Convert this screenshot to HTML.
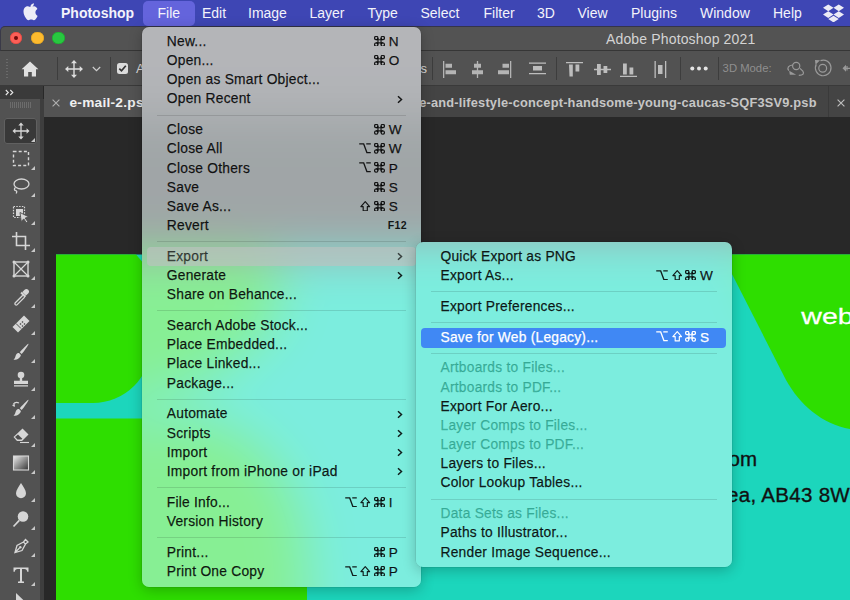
<!DOCTYPE html>
<html><head><meta charset="utf-8">
<style>
*{box-sizing:border-box}
html,body{margin:0;padding:0}
body{width:850px;height:600px;overflow:hidden;position:relative;background:#282828;font-family:"Liberation Sans",sans-serif}
.abs{position:absolute}
svg{display:block}
#menubar{left:0;top:0;width:850px;height:26px;background:#3e46b4}
#menubar span{position:absolute;top:0;line-height:26px;font-size:14px;color:#f3f3fb;white-space:nowrap}
#filehl{left:142.5px;top:0.5px;width:52px;height:25px;border-radius:5px;background:#6464dc}
#titlebar{left:0;top:26px;width:850px;height:25px;background:#535353;border-top-left-radius:5px;border-top:1.2px solid #34344a;border-left:1px solid #3a3a48;border-bottom:1px solid #363636}
.tl{position:absolute;top:31.8px;width:12.4px;height:12.4px;border-radius:50%}
#title{left:606px;top:26px;height:25px;line-height:26px;color:#d4d4d4;font-size:14px;letter-spacing:.15px;white-space:nowrap}
#optbar{left:0;top:51px;width:850px;height:35px;background:#525252;border-bottom:1px solid #3a3a3a}
.vsep{position:absolute;top:57px;width:1px;height:23px;background:#3d3d3d}
#tabbar{left:44px;top:86px;width:806px;height:31px;background:#444444}
#tabact{left:44px;top:86px;width:330px;height:31px;background:#535353}
#panelhdr{left:0;top:86px;width:43px;height:13px;background:#3a3a3a}
#panel{left:0;top:99px;width:40px;height:501px;background:#525252}
#gap{left:40px;top:99px;width:4px;height:501px;background:#3e3e3e}
#gap2{left:43px;top:86px;width:1.5px;height:514px;background:#2e2e2e}
#canvas{left:44px;top:117px;width:806px;height:483px;background:#282828}
.tool{position:absolute;left:0;width:40px;height:26px}
.tool svg{position:absolute;left:11px;top:4px}
.tri{position:absolute;width:0;height:0;border-left:4px solid transparent;border-bottom:4px solid #c8c8c8}
.menu{position:absolute;border-radius:7px;box-shadow:0 0 0 .5px rgba(0,0,0,.12),0 3px 14px rgba(0,0,0,.24);padding-top:5px}
.mbg{position:absolute;left:0;top:0;right:0;bottom:0;border-radius:7px;overflow:hidden}
.mbg svg{position:absolute}
.mov{position:absolute;left:0;top:0;right:0;bottom:0;background:rgba(236,239,242,.615)}
.it{position:relative;height:19.2px;line-height:19.2px;font-size:13.8px;letter-spacing:.23px;color:rgba(0,0,0,.88);-webkit-text-stroke:.25px currentColor;white-space:nowrap;padding-left:25px}
.it.hl{background:none;color:rgba(0,0,0,.68)}
.it.hl:before{content:"";position:absolute;left:5.6px;right:5px;top:-0.2px;bottom:-0.3px;border-radius:4px;background:rgba(190,194,192,.64)}
.it.hl>*{position:absolute}
.it.sel{color:#fff}
.it.sel:before{content:"";position:absolute;left:5.4px;right:5.6px;top:0.9px;bottom:-0.9px;border-radius:4px;background:#4088f4}
.it.sel{z-index:1}
.lbl{position:relative}
.sep{position:relative;height:11.6px}
.sep:after{content:"";position:absolute;left:15px;right:15px;top:6px;height:1px;background:rgba(0,0,0,.12)}
.mk{position:absolute;top:3.9px;height:11px;color:inherit;-webkit-text-stroke:0}
.mk svg{color:inherit}
.ky{position:absolute;top:0;font-size:13.6px;letter-spacing:0}
.f12{font-size:10.6px;font-weight:bold;letter-spacing:.35px;-webkit-text-stroke:0}
.chev{position:absolute;right:17.6px;top:5.3px}
.dis{color:rgba(0,120,95,.5)}
.ic{position:absolute}
</style></head><body>

<!-- menubar -->
<div id="menubar" class="abs">
  <svg class="abs" style="left:22.5px;top:2.5px" width="15" height="18" viewBox="0 0 15 18"><path fill="#ececf6" d="M10.9.2c.1 1.1-.3 2.1-.9 2.8-.7.8-1.6 1.3-2.6 1.2-.1-1 .4-2 1-2.7C9 .8 10 .3 10.9.2zM14.2 6.2c-.1.1-1.8 1-1.8 3.2 0 2.5 2.2 3.3 2.2 3.3s-.3 1.2-1.1 2.4c-.7 1-1.4 2.100-2.600 2.100-1.100 0-1.400-.7-2.700-.7s-1.700.7-2.700.7C4.300 17.200 3.500 16.100 2.800 15.100 1.400 13.100.5 10.600.5 8.500c0-3.400 2.200-5.200 4.400-5.200 1.200 0 2.100.8 2.800.8.700 0 1.700-.9 3-.9.5 0 2.200.1 3.500 2z"/></svg>
  <span style="left:61px;font-weight:bold">Photoshop</span>
  <div id="filehl" class="abs"></div>
  <span style="left:157.5px">File</span>
  <span style="left:202px">Edit</span>
  <span style="left:248px">Image</span>
  <span style="left:309.5px">Layer</span>
  <span style="left:367.5px">Type</span>
  <span style="left:420.5px">Select</span>
  <span style="left:483.5px">Filter</span>
  <span style="left:537px">3D</span>
  <span style="left:577.5px">View</span>
  <span style="left:631px">Plugins</span>
  <span style="left:700px">Window</span>
  <span style="left:773px">Help</span>
  <svg class="abs" style="left:823px;top:4px" width="21" height="18" viewBox="0 0 21 18"><path fill="#ececf6" d="M5.25.5L0 3.85l5.25 3.35L10.5 3.85zM15.75.5L10.5 3.85l5.25 3.35L21 3.85zM0 10.55l5.25 3.35 5.25-3.35L5.25 7.2zM15.75 7.2L10.5 10.55l5.25 3.35L21 10.55zM5.25 15L10.5 18.35 15.75 15 10.5 11.65z"/></svg>
</div>

<!-- title bar -->
<div class="abs" style="left:0;top:20px;width:20px;height:20px;background:#3e46b4"></div>
<div id="titlebar" class="abs"></div>
<div class="tl" style="left:9.8px;background:#fc5f57;box-shadow:inset 0 0 0 .6px #de463f"><div style="position:absolute;left:4.2px;top:4.2px;width:4px;height:4px;border-radius:50%;background:#700b0b"></div></div>
<div class="tl" style="left:31.2px;background:#fdbb2e;box-shadow:inset 0 0 0 .6px #dc9f22"></div>
<div class="tl" style="left:52.3px;background:#28c840;box-shadow:inset 0 0 0 .6px #1ea42f"></div>
<div id="title" class="abs">Adobe Photoshop 2021</div>

<!-- options bar -->
<div id="optbar" class="abs"></div>
<div class="abs" style="left:6px;top:59px;width:2px;height:21px;background:repeating-linear-gradient(#6a6a6a 0 1px,transparent 1px 3px)"></div>
<svg class="ic" style="left:21px;top:61px" width="18" height="16" viewBox="0 0 18 16"><path fill="#e0e0e0" d="M9 0.5L0.6 8.2h2.4V15.5h4.2v-4.6h3.6v4.6h4.2V8.2h2.4z"/></svg>
<div class="vsep" style="left:56.5px"></div>
<svg class="ic" style="left:65px;top:60px" width="18" height="18" viewBox="0 0 18 18"><path fill="none" stroke="#dedede" stroke-width="1.4" d="M9 1.5v15M1.5 9h15"/><path fill="#dedede" d="M9 0L6 3.3h6zM9 18l-3-3.3h6zM0 9l3.3-3v6zM18 9l-3.3-3v6z"/></svg>
<svg class="ic" style="left:92px;top:66px" width="9" height="6" viewBox="0 0 9 6"><path d="M.8 1l3.7 3.6L8.2 1" fill="none" stroke="#cfcfcf" stroke-width="1.2"/></svg>
<div class="vsep" style="left:109.5px"></div>
<div class="abs" style="left:116.8px;top:62.6px;width:11.2px;height:11.4px;border-radius:2.5px;background:#dcdcdc"></div>
<svg class="ic" style="left:118px;top:64px" width="9" height="9" viewBox="0 0 9 9"><path d="M1.3 4.6l2.2 2.2 4.3-5" fill="none" stroke="#333" stroke-width="1.7"/></svg>
<div class="abs" style="left:136px;top:51px;line-height:35px;font-size:13px;color:#dadada">Auto-Select:</div>
<div class="abs" style="right:423px;top:51px;line-height:35px;font-size:13px;color:#dadada;white-space:nowrap">Show Transform Controls</div>
<div class="vsep" style="left:431.5px"></div>
<!-- align icons -->
<svg class="ic" style="left:441px;top:61px" width="17" height="17" viewBox="0 0 17 17"><path fill="#b4b4b4" d="M2 0h1.3v17H2zM4.5 2.8h6.5v4h-6.5zM4.5 9.3h10.5v4h-10.5z"/></svg>
<svg class="ic" style="left:468.5px;top:61px" width="17" height="17" viewBox="0 0 17 17"><path fill="#b4b4b4" d="M7.85 0h1.3v17h-1.3zM5 2.8h7v4H5zM3 9.3h11v4H3z"/></svg>
<svg class="ic" style="left:496px;top:61px" width="17" height="17" viewBox="0 0 17 17"><path fill="#b4b4b4" d="M14 0h1.3v17H14zM6.5 2.8h6.5v4H6.5zM2 9.3h11v4H2z"/></svg>
<svg class="ic" style="left:529px;top:61px" width="17" height="17" viewBox="0 0 17 17"><path fill="#bdbdbd" d="M0 1.5h17v1.3H0zM4 5h9v4.5H4zM0 12h17v1.3H0z"/></svg>
<div class="vsep" style="left:556px"></div>
<svg class="ic" style="left:565.5px;top:61px" width="17" height="17" viewBox="0 0 17 17"><path fill="#bdbdbd" d="M0 1h17v1.3H0zM3 3.5h3.8v12H3.5zM9.5 3.5h3.8v7H9.5z"/></svg>
<svg class="ic" style="left:593.5px;top:61px" width="17" height="17" viewBox="0 0 17 17"><path fill="#bdbdbd" d="M0 7.85h17v1.3H0zM3 3h3.8v11H3zM9.5 5h3.8v7H9.5z"/></svg>
<svg class="ic" style="left:620px;top:61px" width="17" height="17" viewBox="0 0 17 17"><path fill="#bdbdbd" d="M0 14.7h17v1.3H0zM3 2.5h3.8v11H3zM9.5 6.5h3.8v7H9.5z"/></svg>
<svg class="ic" style="left:652.5px;top:61px" width="17" height="17" viewBox="0 0 17 17"><path fill="#bdbdbd" d="M1.5 0h1.3v17H1.5zM5 4h4.5v9H5zM12 0h1.3v17H12z"/></svg>
<div class="vsep" style="left:680px"></div>
<svg class="ic" style="left:690px;top:66px" width="18" height="5" viewBox="0 0 18 5"><circle cx="2.3" cy="2.5" r="2" fill="#e4e4e4"/><circle cx="9" cy="2.5" r="2" fill="#e4e4e4"/><circle cx="15.7" cy="2.5" r="2" fill="#e4e4e4"/></svg>
<div class="vsep" style="left:717.5px"></div>
<div class="abs" style="left:722.6px;top:51px;line-height:35px;font-size:11.3px;color:#8f8f8f;white-space:nowrap">3D Mode:</div>
<svg class="ic" style="left:780px;top:55px" width="70" height="30" viewBox="0 0 70 30"><g fill="none" stroke="#9a9a9a" stroke-width="1.2"><circle cx="16.2" cy="11" r="3.6"/><path d="M12.7 10C8.500 10.300 6.700 12.800 8.800 15.600"/><path d="M18.800 20.300C23.500 20.300 24.300 18.300 22.800 16.200L20 13.300"/><path d="M36.300 9.300A7.800 7.800 0 1 0 40.500 5.600"/><circle cx="42.700" cy="13.300" r="3.900"/><path d="M70 13.300H65M67 11V15.600"/></g><g fill="#9a9a9a"><path d="M9.200 15.800L16.200 19.800H9.800z"/><path d="M35 5L40 5.300 35.500 9.700z"/><path d="M62.500 13.300L66 9.800V16.800z"/></g></svg>
<!-- tab bar -->
<div id="tabbar" class="abs"></div>
<div id="tabact" class="abs"></div>
<div class="abs" style="left:828px;top:86px;width:1px;height:31px;background:#3a3a3a"></div>
<svg class="ic" style="left:51.5px;top:99px" width="8" height="8" viewBox="0 0 8 8"><path d="M.6.6l6.8 6.8M7.4.6L.6 7.4" stroke="#b0b0b0" stroke-width="1.1"/></svg>
<div class="abs" style="left:69.5px;top:87px;line-height:31px;font-size:13.7px;letter-spacing:.25px;font-weight:bold;color:#f0f0f0;white-space:nowrap">e-mail-2.psd @ 33.3% (RGB/8)</div>
<div class="abs" style="left:217px;top:86px;width:611px;height:31px;background:#444444"></div>
<div class="abs" style="right:33.3px;top:87.2px;line-height:31px;font-size:12.8px;letter-spacing:.2px;font-weight:bold;color:#c6c6c6;white-space:nowrap">close-up-portrait-of-male-and-lifestyle-concept-handsome-young-caucas-SQF3SV9.psb</div>
<svg class="ic" style="left:836.5px;top:98.5px" width="8" height="8" viewBox="0 0 8 8"><path d="M.6.6l6.8 6.8M7.4.6L.6 7.4" stroke="#c0c0c0" stroke-width="1.1"/></svg>
<div id="panelhdr" class="abs"></div>
<svg class="ic" style="left:5px;top:89px" width="10" height="7" viewBox="0 0 10 7"><path d="M.8 1l2.5 2.5L.8 6M5.3 1l2.5 2.5L5.3 6" fill="none" stroke="#e8e8e8" stroke-width="1.1"/></svg>
<div id="panel" class="abs"></div>
<div id="gap" class="abs"></div>
<div class="abs" style="left:10px;top:102px;width:21px;height:6px;background:repeating-linear-gradient(90deg,#6c6c6c 0 1px,transparent 1px 2px)"></div>

<!-- canvas -->
<div id="canvas" class="abs"></div>

<svg class="abs" style="left:0;top:0" width="850" height="600" viewBox="0 0 850 600"><rect x="56" y="254.5" width="794" height="346" fill="#1cd6bc"/><path fill="#2ede00" d="M56 254.5H136L151 272V345A58 58 0 0 1 93 403H56Z"/><path fill="#2ede00" d="M56 418.5H150C245 418.5 307 480 307 580V600H56Z"/><path fill="#2ede00" d="M722 254.5H850V429C822 424 800 405 786 380L722 254.5Z"/><text transform="translate(801.3 323.8) scale(1.27 1)" font-family="Liberation Sans" font-size="22.5" fill="#fff" stroke="#fff" stroke-width="0.25">web</text><text x="757" y="466" text-anchor="end" font-family="Liberation Sans" font-size="20.5" fill="#111" stroke="#111" stroke-width="0.35">info@company.com</text><text x="850" y="502" text-anchor="end" font-family="Liberation Sans" font-size="20.5" fill="#111" stroke="#111" stroke-width="0.35" letter-spacing="0.3">Street, Area, AB43 8W</text></svg>

<!-- tools -->
<div class="abs" style="left:4px;top:117.6px;width:33px;height:26.4px;border-radius:3px;background:#383838;box-shadow:inset 0 0 0 1px #606060"></div>
<svg class="ic" style="left:11.5px;top:122.0px" width="18" height="18" viewBox="0 0 18 18"><path fill="none" stroke="#d6d6d6" stroke-width="1.3" d="M9 2.5v13M2.5 9h13"/><path fill="#d6d6d6" d="M9 .5L6.3 3.4h5.4zM9 17.5l-2.7-2.9h5.4zM.5 9l2.9-2.7v5.4zM17.5 9l-2.9-2.7v5.4z"/></svg>
<div class="tri" style="left:31px;top:138.0px"></div>
<svg class="ic" style="left:11.5px;top:150.0px" width="18" height="18" viewBox="0 0 18 18"><rect x="1.5" y="1.5" width="15" height="14" fill="none" stroke="#d6d6d6" stroke-width="1.4" stroke-dasharray="3 2.2"/></svg>
<div class="tri" style="left:31px;top:166.0px"></div>
<svg class="ic" style="left:11.5px;top:177.0px" width="18" height="18" viewBox="0 0 18 18"><ellipse cx="9.5" cy="7" rx="7.5" ry="5" fill="none" stroke="#d6d6d6" stroke-width="1.3"/><path d="M3.5 10.5c-1.5 1-1.5 3 .3 3.2 1.2.1 1.2 1.5.3 2.8" fill="none" stroke="#d6d6d6" stroke-width="1.3"/></svg>
<div class="tri" style="left:31px;top:193.0px"></div>
<svg class="ic" style="left:11.5px;top:205.0px" width="18" height="18" viewBox="0 0 18 18"><rect x="1.5" y="1.5" width="11" height="11" fill="none" stroke="#d6d6d6" stroke-width="1.2" stroke-dasharray="1.5 1.3"/><path fill="#d6d6d6" d="M4 4h7v7H4z"/><path fill="#d6d6d6" stroke="#4e4e4e" stroke-width=".9" d="M8 7.5l9 4.5-3.8 1 2.6 3.8-1.6.9-2.4-3.8-2.6 2.6z"/></svg>
<div class="tri" style="left:31px;top:221.0px"></div>
<svg class="ic" style="left:11.5px;top:232.0px" width="18" height="18" viewBox="0 0 18 18"><path fill="none" stroke="#d6d6d6" stroke-width="1.6" d="M4.5 0v13.5H18M0 4.5h13.5V18"/></svg>
<div class="tri" style="left:31px;top:248.0px"></div>
<svg class="ic" style="left:11.5px;top:260.0px" width="18" height="18" viewBox="0 0 18 18"><rect x="2" y="2" width="14" height="14" fill="none" stroke="#d6d6d6" stroke-width="1.4"/><path d="M2 2l14 14M16 2L2 16" stroke="#d6d6d6" stroke-width="1.2"/><g fill="#d6d6d6"><circle cx="2" cy="2" r="1.5"/><circle cx="16" cy="2" r="1.5"/><circle cx="2" cy="16" r="1.5"/><circle cx="16" cy="16" r="1.5"/></g></svg>
<div class="tri" style="left:31px;top:276.0px"></div>
<svg class="ic" style="left:11.5px;top:288.0px" width="18" height="18" viewBox="0 0 18 18"><path fill="#d6d6d6" d="M12.6 1.8a2.5 2.5 0 0 1 3.6 3.6L14 7.6 10.4 4z"/><path fill="#d6d6d6" d="M8.4 5.3l1.5-1.5 4.3 4.3-1.5 1.5z"/><path fill="none" stroke="#d6d6d6" stroke-width="1.3" d="M10.8 7.2L3.300 14.700a1.300 1.300 0 0 0 1.900 1.900L12.700 9.100"/></svg>
<div class="tri" style="left:31px;top:304.0px"></div>
<svg class="ic" style="left:11.5px;top:315.0px" width="18" height="18" viewBox="0 0 18 18"><path fill="#d6d6d6" d="M6 17.5L.5 12 12 .5l5.5 5.5z"/><path fill="#4e4e4e" d="M7.5 9l1-1 1 1-1 1zM9.5 11l1-1 1 1-1 1zM9.5 7l1-1 1 1-1 1zM11.5 9l1-1 1 1-1 1z"/><path fill="none" stroke="#4e4e4e" stroke-width="1" d="M4 8.5l5 5"/></svg>
<div class="tri" style="left:31px;top:331.0px"></div>
<svg class="ic" style="left:11.5px;top:343.0px" width="18" height="18" viewBox="0 0 18 18"><path fill="#d6d6d6" d="M16.5.8c.6.4-5 8.5-6.8 10.2L7.8 9.2C9.6 7.4 15.9.4 16.5.8zM7 10l1.9 1.9c-.5 2.5-2.6 4.800-7.400 4.800 1.900-1.400 1.700-3.600 2.700-5.300C5 10.200 6.200 9.900 7 10z"/></svg>
<div class="tri" style="left:31px;top:359.0px"></div>
<svg class="ic" style="left:11.5px;top:371.0px" width="18" height="18" viewBox="0 0 18 18"><circle cx="9" cy="4" r="3.3" fill="#d6d6d6"/><path fill="#d6d6d6" d="M7.8 6.5h2.4v3.2H16v3.3H2V9.7h5.8zM2 14.3h14v1.3H2z"/></svg>
<div class="tri" style="left:31px;top:387.0px"></div>
<svg class="ic" style="left:11.5px;top:399.0px" width="18" height="18" viewBox="0 0 18 18"><path fill="#d6d6d6" d="M16.5.8c.6.4-5 8.5-6.8 10.2L7.8 9.2C9.6 7.4 15.9.4 16.5.8zM7 10l1.9 1.9c-.5 2.5-2.6 4.800-7.400 4.800 1.900-1.400 1.700-3.600 2.700-5.300C5 10.200 6.200 9.900 7 10z"/><path fill="none" stroke="#d6d6d6" stroke-width="1.1" d="M1 5.5c1.5-2 4-2.5 6-1.5"/><path fill="#d6d6d6" d="M0 6.5l3-1.5-.3 3z"/></svg>
<div class="tri" style="left:31px;top:415.0px"></div>
<svg class="ic" style="left:11.5px;top:427.0px" width="18" height="18" viewBox="0 0 18 18"><path fill="#d6d6d6" d="M10.5 1.5l6 6-6.5 6.500H5L1.500 10z"/><path fill="#4e4e4e" d="M3 10l2.5 2.5h4l.8-.8-4.300-4.300z"/><path fill="none" stroke="#d6d6d6" stroke-width="1.1" d="M8 15.5h9"/></svg>
<div class="tri" style="left:31px;top:443.0px"></div>
<svg class="ic" style="left:11.5px;top:454.0px" width="18" height="18" viewBox="0 0 18 18"><defs><linearGradient id="gg" x1="0" y1="0" x2="1" y2="1"><stop offset="0" stop-color="#eee"/><stop offset="1" stop-color="#333"/></linearGradient></defs><rect x="1.5" y="2" width="15" height="14" fill="url(#gg)" stroke="#d6d6d6" stroke-width="1.1"/></svg>
<div class="tri" style="left:31px;top:470.0px"></div>
<svg class="ic" style="left:11.5px;top:482.0px" width="18" height="18" viewBox="0 0 18 18"><path fill="#d6d6d6" d="M9 1C11 4.500 14 8 14 11.300a5 5 0 0 1-10 0C4 8 7 4.500 9 1z"/></svg>
<div class="tri" style="left:31px;top:498.0px"></div>
<svg class="ic" style="left:11.5px;top:510.0px" width="18" height="18" viewBox="0 0 18 18"><circle cx="11" cy="6.500" r="5.300" fill="#d6d6d6"/><path d="M7.300 10.300L1.500 16.500" stroke="#d6d6d6" stroke-width="1.700"/></svg>
<div class="tri" style="left:31px;top:526.0px"></div>
<svg class="ic" style="left:11.5px;top:537.0px" width="18" height="18" viewBox="0 0 18 18"><path fill="none" stroke="#d6d6d6" stroke-width="1.3" d="M3 15.500l2-7 6.500-3.500 2 2-3.500 6.500zM3 15.500l4.500-4.500M11.5 5l2-2.500 2.500 2.500-2.500 2"/><circle cx="8.300" cy="10.200" r="1.200" fill="#d6d6d6"/></svg>
<div class="tri" style="left:31px;top:553.0px"></div>
<svg class="ic" style="left:11.5px;top:566.0px" width="18" height="18" viewBox="0 0 18 18"><path fill="#d6d6d6" d="M1.500 1.500h15v4.300h-1.300c-.3-1.800-.800-2.700-3-2.700H10v11.300c0 .900.500 1.200 2 1.200v1.300H6v-1.300c1.500 0 2-.3 2-1.200V3.100H5.800c-2.200 0-2.700.900-3 2.700H1.500z"/></svg>
<div class="tri" style="left:31px;top:582.0px"></div>
<svg class="ic" style="left:11.5px;top:593.0px" width="18" height="18" viewBox="0 0 18 18"><path fill="#d6d6d6" d="M4 0v16l4-4 3 6 2-1-3-6h5.500z"/></svg>

<!-- File menu -->
<div class="menu" style="left:141.8px;top:26.8px;width:279.2px;height:560px"><div class="mbg"><svg style="left:-141.8px;top:-26.8px" width="850" height="600" viewBox="0 0 850 600"><defs><filter id="vb1" x="-300" y="-300" width="1450" height="1200" filterUnits="userSpaceOnUse" color-interpolation-filters="sRGB"><feGaussianBlur stdDeviation="25"/><feColorMatrix type="matrix" values="0.7244 -0.1575 0.0015 0 0.5369 0.0256 0.4075 0.0095 0 0.5790 0.1095 -0.0162 0.4026 0 0.5761 0 0 0 1 0"/></filter></defs><g filter="url(#vb1)"><rect x="-200" y="-200" width="1250" height="226" fill="#4b4b4b"/><rect x="-200" y="26" width="1250" height="91" fill="#4b4b4b"/><rect x="-200" y="99" width="244" height="700" fill="#4e4e4e"/><rect x="44" y="117" width="1000" height="700" fill="#282828"/><rect x="56" y="254.5" width="1000" height="600" fill="#1cd6bc"/><path fill="#2ede00" d="M56 254.5H250C292 254.5 292 312 250 347C215 378 160 403 93 403H56Z"/><path fill="#2ede00" d="M56 418.5H185C265 425 307 490 307 580V800H56Z"/><path fill="#2ede00" d="M721 254.5H1000V429C828 418 805 395 792 378Z"/></g></svg></div>
<div class="it"><span class="lbl">New...</span><span class="mk" style="left:232.1px"><svg width="11" height="10.6" viewBox="0 0 11 11"><g fill="none" stroke="currentColor" stroke-width="1.25"><path d="M3.9 2.1V8.9M7.1 2.1V8.9M2.1 3.9H8.9M2.1 7.1H8.9"/><circle cx="2.1" cy="2.1" r="1.75"/><circle cx="8.9" cy="2.1" r="1.75"/><circle cx="2.1" cy="8.9" r="1.75"/><circle cx="8.9" cy="8.9" r="1.75"/></g></svg></span><span class="ky" style="left:246.9px">N</span></div>
<div class="it"><span class="lbl">Open...</span><span class="mk" style="left:232.1px"><svg width="11" height="10.6" viewBox="0 0 11 11"><g fill="none" stroke="currentColor" stroke-width="1.25"><path d="M3.9 2.1V8.9M7.1 2.1V8.9M2.1 3.9H8.9M2.1 7.1H8.9"/><circle cx="2.1" cy="2.1" r="1.75"/><circle cx="8.9" cy="2.1" r="1.75"/><circle cx="2.1" cy="8.9" r="1.75"/><circle cx="8.9" cy="8.9" r="1.75"/></g></svg></span><span class="ky" style="left:246.9px">O</span></div>
<div class="it"><span class="lbl">Open as Smart Object...</span></div>
<div class="it"><span class="lbl">Open Recent</span><svg class="chev" width="6" height="9" viewBox="0 0 6 9"><path d="M1 1.2l3.5 3.3L1 7.8" fill="none" stroke="currentColor" stroke-width="1.5"/></svg></div>
<div class="sep"></div>
<div class="it"><span class="lbl">Close</span><span class="mk" style="left:232.1px"><svg width="11" height="10.6" viewBox="0 0 11 11"><g fill="none" stroke="currentColor" stroke-width="1.25"><path d="M3.9 2.1V8.9M7.1 2.1V8.9M2.1 3.9H8.9M2.1 7.1H8.9"/><circle cx="2.1" cy="2.1" r="1.75"/><circle cx="8.9" cy="2.1" r="1.75"/><circle cx="2.1" cy="8.9" r="1.75"/><circle cx="8.9" cy="8.9" r="1.75"/></g></svg></span><span class="ky" style="left:246.9px">W</span></div>
<div class="it"><span class="lbl">Close All</span><span class="mk" style="left:216.9px"><svg width="12" height="10.6" viewBox="0 0 12 11"><path d="M0 0.9H4.6L8 10H12M7.3 0.9H12" fill="none" stroke="currentColor" stroke-width="1.45"/></svg></span><span class="mk" style="left:232.1px"><svg width="11" height="10.6" viewBox="0 0 11 11"><g fill="none" stroke="currentColor" stroke-width="1.25"><path d="M3.9 2.1V8.9M7.1 2.1V8.9M2.1 3.9H8.9M2.1 7.1H8.9"/><circle cx="2.1" cy="2.1" r="1.75"/><circle cx="8.9" cy="2.1" r="1.75"/><circle cx="2.1" cy="8.9" r="1.75"/><circle cx="8.9" cy="8.9" r="1.75"/></g></svg></span><span class="ky" style="left:246.9px">W</span></div>
<div class="it"><span class="lbl">Close Others</span><span class="mk" style="left:216.9px"><svg width="12" height="10.6" viewBox="0 0 12 11"><path d="M0 0.9H4.6L8 10H12M7.3 0.9H12" fill="none" stroke="currentColor" stroke-width="1.45"/></svg></span><span class="mk" style="left:232.1px"><svg width="11" height="10.6" viewBox="0 0 11 11"><g fill="none" stroke="currentColor" stroke-width="1.25"><path d="M3.9 2.1V8.9M7.1 2.1V8.9M2.1 3.9H8.9M2.1 7.1H8.9"/><circle cx="2.1" cy="2.1" r="1.75"/><circle cx="8.9" cy="2.1" r="1.75"/><circle cx="2.1" cy="8.9" r="1.75"/><circle cx="8.9" cy="8.9" r="1.75"/></g></svg></span><span class="ky" style="left:246.9px">P</span></div>
<div class="it"><span class="lbl">Save</span><span class="mk" style="left:232.1px"><svg width="11" height="10.6" viewBox="0 0 11 11"><g fill="none" stroke="currentColor" stroke-width="1.25"><path d="M3.9 2.1V8.9M7.1 2.1V8.9M2.1 3.9H8.9M2.1 7.1H8.9"/><circle cx="2.1" cy="2.1" r="1.75"/><circle cx="8.9" cy="2.1" r="1.75"/><circle cx="2.1" cy="8.9" r="1.75"/><circle cx="8.9" cy="8.9" r="1.75"/></g></svg></span><span class="ky" style="left:246.9px">S</span></div>
<div class="it"><span class="lbl">Save As...</span><span class="mk" style="left:218.4px"><svg width="10.5" height="10.6" viewBox="0 0 10.5 11"><path d="M5.25 0.7L0.7 5.8H3.1V10.3H7.4V5.8H9.8Z" fill="none" stroke="currentColor" stroke-width="1.2" stroke-linejoin="round"/></svg></span><span class="mk" style="left:232.1px"><svg width="11" height="10.6" viewBox="0 0 11 11"><g fill="none" stroke="currentColor" stroke-width="1.25"><path d="M3.9 2.1V8.9M7.1 2.1V8.9M2.1 3.9H8.9M2.1 7.1H8.9"/><circle cx="2.1" cy="2.1" r="1.75"/><circle cx="8.9" cy="2.1" r="1.75"/><circle cx="2.1" cy="8.9" r="1.75"/><circle cx="8.9" cy="8.9" r="1.75"/></g></svg></span><span class="ky" style="left:246.9px">S</span></div>
<div class="it"><span class="lbl">Revert</span><span class="ky f12" style="left:245.9px">F12</span></div>
<div class="sep"></div>
<div class="it hl"><span class="lbl">Export</span><svg class="chev" width="6" height="9" viewBox="0 0 6 9"><path d="M1 1.2l3.5 3.3L1 7.8" fill="none" stroke="currentColor" stroke-width="1.5"/></svg></div>
<div class="it"><span class="lbl">Generate</span><svg class="chev" width="6" height="9" viewBox="0 0 6 9"><path d="M1 1.2l3.5 3.3L1 7.8" fill="none" stroke="currentColor" stroke-width="1.5"/></svg></div>
<div class="it"><span class="lbl">Share on Behance...</span></div>
<div class="sep"></div>
<div class="it"><span class="lbl">Search Adobe Stock...</span></div>
<div class="it"><span class="lbl">Place Embedded...</span></div>
<div class="it"><span class="lbl">Place Linked...</span></div>
<div class="it"><span class="lbl">Package...</span></div>
<div class="sep"></div>
<div class="it"><span class="lbl">Automate</span><svg class="chev" width="6" height="9" viewBox="0 0 6 9"><path d="M1 1.2l3.5 3.3L1 7.8" fill="none" stroke="currentColor" stroke-width="1.5"/></svg></div>
<div class="it"><span class="lbl">Scripts</span><svg class="chev" width="6" height="9" viewBox="0 0 6 9"><path d="M1 1.2l3.5 3.3L1 7.8" fill="none" stroke="currentColor" stroke-width="1.5"/></svg></div>
<div class="it"><span class="lbl">Import</span><svg class="chev" width="6" height="9" viewBox="0 0 6 9"><path d="M1 1.2l3.5 3.3L1 7.8" fill="none" stroke="currentColor" stroke-width="1.5"/></svg></div>
<div class="it"><span class="lbl">Import from iPhone or iPad</span><svg class="chev" width="6" height="9" viewBox="0 0 6 9"><path d="M1 1.2l3.5 3.3L1 7.8" fill="none" stroke="currentColor" stroke-width="1.5"/></svg></div>
<div class="sep"></div>
<div class="it"><span class="lbl">File Info...</span><span class="mk" style="left:203.2px"><svg width="12" height="10.6" viewBox="0 0 12 11"><path d="M0 0.9H4.6L8 10H12M7.3 0.9H12" fill="none" stroke="currentColor" stroke-width="1.45"/></svg></span><span class="mk" style="left:218.4px"><svg width="10.5" height="10.6" viewBox="0 0 10.5 11"><path d="M5.25 0.7L0.7 5.8H3.1V10.3H7.4V5.8H9.8Z" fill="none" stroke="currentColor" stroke-width="1.2" stroke-linejoin="round"/></svg></span><span class="mk" style="left:232.1px"><svg width="11" height="10.6" viewBox="0 0 11 11"><g fill="none" stroke="currentColor" stroke-width="1.25"><path d="M3.9 2.1V8.9M7.1 2.1V8.9M2.1 3.9H8.9M2.1 7.1H8.9"/><circle cx="2.1" cy="2.1" r="1.75"/><circle cx="8.9" cy="2.1" r="1.75"/><circle cx="2.1" cy="8.9" r="1.75"/><circle cx="8.9" cy="8.9" r="1.75"/></g></svg></span><span class="ky" style="left:246.9px">I</span></div>
<div class="it"><span class="lbl">Version History</span></div>
<div class="sep"></div>
<div class="it"><span class="lbl">Print...</span><span class="mk" style="left:232.1px"><svg width="11" height="10.6" viewBox="0 0 11 11"><g fill="none" stroke="currentColor" stroke-width="1.25"><path d="M3.9 2.1V8.9M7.1 2.1V8.9M2.1 3.9H8.9M2.1 7.1H8.9"/><circle cx="2.1" cy="2.1" r="1.75"/><circle cx="8.9" cy="2.1" r="1.75"/><circle cx="2.1" cy="8.9" r="1.75"/><circle cx="8.9" cy="8.9" r="1.75"/></g></svg></span><span class="ky" style="left:246.9px">P</span></div>
<div class="it"><span class="lbl">Print One Copy</span><span class="mk" style="left:203.2px"><svg width="12" height="10.6" viewBox="0 0 12 11"><path d="M0 0.9H4.6L8 10H12M7.3 0.9H12" fill="none" stroke="currentColor" stroke-width="1.45"/></svg></span><span class="mk" style="left:218.4px"><svg width="10.5" height="10.6" viewBox="0 0 10.5 11"><path d="M5.25 0.7L0.7 5.8H3.1V10.3H7.4V5.8H9.8Z" fill="none" stroke="currentColor" stroke-width="1.2" stroke-linejoin="round"/></svg></span><span class="mk" style="left:232.1px"><svg width="11" height="10.6" viewBox="0 0 11 11"><g fill="none" stroke="currentColor" stroke-width="1.25"><path d="M3.9 2.1V8.9M7.1 2.1V8.9M2.1 3.9H8.9M2.1 7.1H8.9"/><circle cx="2.1" cy="2.1" r="1.75"/><circle cx="8.9" cy="2.1" r="1.75"/><circle cx="2.1" cy="8.9" r="1.75"/><circle cx="8.9" cy="8.9" r="1.75"/></g></svg></span><span class="ky" style="left:246.9px">P</span></div>
</div>

<!-- Export submenu -->
<div class="menu" style="left:415.5px;top:241.8px;width:316.3px;height:325.2px"><div class="mbg"><svg style="left:-415.5px;top:-241.8px" width="850" height="600" viewBox="0 0 850 600"><defs><filter id="vb2" x="-300" y="-300" width="1450" height="1200" filterUnits="userSpaceOnUse" color-interpolation-filters="sRGB"><feGaussianBlur stdDeviation="25"/><feColorMatrix type="matrix" values="0.7244 -0.1575 0.0015 0 0.5369 0.0256 0.4075 0.0095 0 0.5790 0.1095 -0.0162 0.4026 0 0.5761 0 0 0 1 0"/></filter></defs><g filter="url(#vb2)"><rect x="-200" y="-200" width="1250" height="226" fill="#4b4b4b"/><rect x="-200" y="26" width="1250" height="91" fill="#4b4b4b"/><rect x="-200" y="99" width="244" height="700" fill="#4e4e4e"/><rect x="44" y="117" width="1000" height="700" fill="#282828"/><rect x="56" y="254.5" width="1000" height="600" fill="#1cd6bc"/><rect x="300" y="236" width="700" height="30" fill="#1cd6bc"/><path fill="#2ede00" d="M745 254.5H1000V429C840 418 820 395 805 378Z"/></g></svg></div>
<div class="it"><span class="lbl">Quick Export as PNG</span></div>
<div class="it"><span class="lbl">Export As...</span><span class="mk" style="left:240.8px"><svg width="12" height="10.6" viewBox="0 0 12 11"><path d="M0 0.9H4.6L8 10H12M7.3 0.9H12" fill="none" stroke="currentColor" stroke-width="1.45"/></svg></span><span class="mk" style="left:256.0px"><svg width="10.5" height="10.6" viewBox="0 0 10.5 11"><path d="M5.25 0.7L0.7 5.8H3.1V10.3H7.4V5.8H9.8Z" fill="none" stroke="currentColor" stroke-width="1.2" stroke-linejoin="round"/></svg></span><span class="mk" style="left:269.7px"><svg width="11" height="10.6" viewBox="0 0 11 11"><g fill="none" stroke="currentColor" stroke-width="1.25"><path d="M3.9 2.1V8.9M7.1 2.1V8.9M2.1 3.9H8.9M2.1 7.1H8.9"/><circle cx="2.1" cy="2.1" r="1.75"/><circle cx="8.9" cy="2.1" r="1.75"/><circle cx="2.1" cy="8.9" r="1.75"/><circle cx="8.9" cy="8.9" r="1.75"/></g></svg></span><span class="ky" style="left:284.5px">W</span></div>
<div class="sep"></div>
<div class="it"><span class="lbl">Export Preferences...</span></div>
<div class="sep"></div>
<div class="it sel"><span class="lbl">Save for Web (Legacy)...</span><span class="mk" style="left:240.8px"><svg width="12" height="10.6" viewBox="0 0 12 11"><path d="M0 0.9H4.6L8 10H12M7.3 0.9H12" fill="none" stroke="currentColor" stroke-width="1.45"/></svg></span><span class="mk" style="left:256.0px"><svg width="10.5" height="10.6" viewBox="0 0 10.5 11"><path d="M5.25 0.7L0.7 5.8H3.1V10.3H7.4V5.8H9.8Z" fill="none" stroke="currentColor" stroke-width="1.2" stroke-linejoin="round"/></svg></span><span class="mk" style="left:269.7px"><svg width="11" height="10.6" viewBox="0 0 11 11"><g fill="none" stroke="currentColor" stroke-width="1.25"><path d="M3.9 2.1V8.9M7.1 2.1V8.9M2.1 3.9H8.9M2.1 7.1H8.9"/><circle cx="2.1" cy="2.1" r="1.75"/><circle cx="8.9" cy="2.1" r="1.75"/><circle cx="2.1" cy="8.9" r="1.75"/><circle cx="8.9" cy="8.9" r="1.75"/></g></svg></span><span class="ky" style="left:284.5px">S</span></div>
<div class="sep"></div>
<div class="it dis"><span class="lbl">Artboards to Files...</span></div>
<div class="it dis"><span class="lbl">Artboards to PDF...</span></div>
<div class="it"><span class="lbl">Export For Aero...</span></div>
<div class="it dis"><span class="lbl">Layer Comps to Files...</span></div>
<div class="it dis"><span class="lbl">Layer Comps to PDF...</span></div>
<div class="it"><span class="lbl">Layers to Files...</span></div>
<div class="it"><span class="lbl">Color Lookup Tables...</span></div>
<div class="sep"></div>
<div class="it dis"><span class="lbl">Data Sets as Files...</span></div>
<div class="it"><span class="lbl">Paths to Illustrator...</span></div>
<div class="it"><span class="lbl">Render Image Sequence...</span></div>
</div>

</body></html>
